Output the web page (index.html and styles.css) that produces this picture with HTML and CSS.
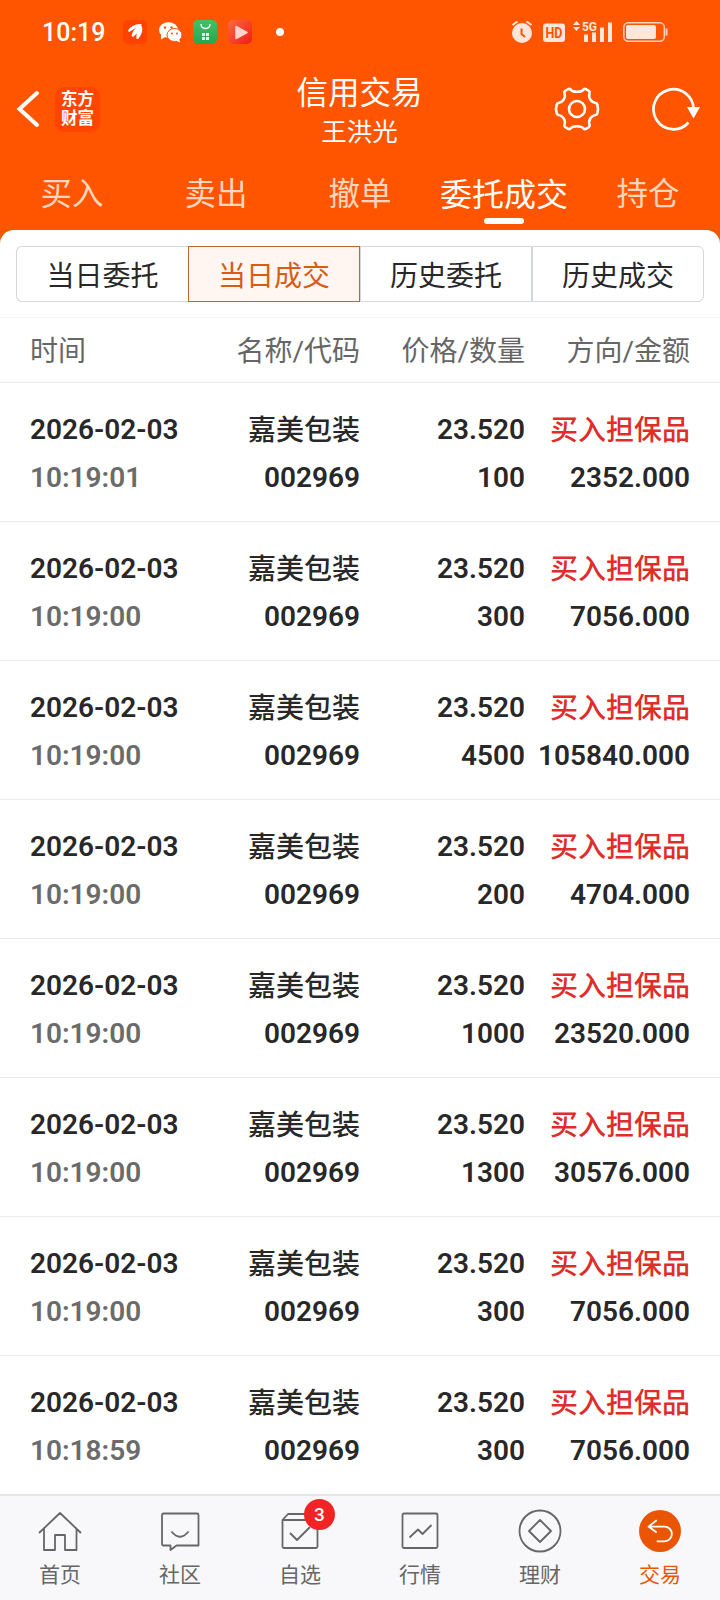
FILE: index.html
```html
<!DOCTYPE html>
<html lang="zh-CN">
    <head>
        <meta charset="utf-8">
        <meta name="viewport" content="width=device-width, initial-scale=1">
        <title>信用交易</title>
        <link rel="stylesheet" href="styles.css">
    </head>
    <body>
        <header class="top">
            <div class="status">
                <span class="clock">10:19</span>
                <svg class="status-left" width="170" height="40" viewBox="0 0 170 40">
                    <defs>
                        <linearGradient id="shop" x1="0" y1="0" x2="0" y2="1"><stop offset="0" stop-color="#43c168"/><stop offset="1" stop-color="#26a74b"/></linearGradient>
                        <linearGradient id="video" x1="0" y1="0" x2="1" y2="1"><stop offset="0" stop-color="#fb6a3c"/><stop offset="1" stop-color="#f01c1c"/></linearGradient>
                    </defs>
                    <rect x="8" y="8" width="24" height="24" rx="5" fill="#ff4200"/>
                    <path d="M13 18.500c2-3.500 6-6.500 13-6.500l1 1c-5 1-9 5-13 7zM16.500 24c1-5 4-9 9-11l1 1c-2 5-5 8-8.500 11zM21.500 27c-.500-5 1-10 5-13 2 4 0 9-3.500 13z" fill="#fff"/>
                    <ellipse cx="53.500" cy="18" rx="9.500" ry="7.700" fill="#fff"/>
                    <path d="M46 22v5.500l5-3z" fill="#fff"/>
                    <ellipse cx="59.500" cy="23" rx="7.500" ry="6.500" fill="#fff" stroke="#ff5500"/>
                    <path d="M61 28.500l4 2-1-4.500z" fill="#fff"/>
                    <g fill="#ff5500"><circle cx="50" cy="15.500" r="1.200"/><circle cx="56.500" cy="15.500" r="1.200"/><circle cx="57" cy="21.500" r="1"/><circle cx="62" cy="21.500" r="1"/></g>
                    <rect x="78" y="8" width="24" height="24" rx="5" fill="url(#shop)"/>
                    <path d="M86 12c0 6 9 6 9 0" fill="none" stroke="#fff" stroke-width="1.300"/>
                    <path d="M87 21h3v3h-3zM91 21h3v3h-3zM87 25h3v3h-3zM91 25h3v3h-3z" fill="#fff" opacity=".85"/>
                    <rect x="113" y="8" width="24" height="24" rx="5" fill="url(#video)"/>
                    <path d="M121 14.500l11 6-11 6z" fill="#ffd5cc" stroke="#ffd5cc" stroke-width="1.500" stroke-linejoin="round"/>
                    <circle cx="165" cy="20" r="4" fill="#fff"/>
                </svg>
                <svg class="status-right" width="170" height="36" viewBox="0 0 170 36">
                    <circle cx="17" cy="19" r="10" fill="#ffe6db"/>
                    <path d="M7.500 11l5-3.500M26.500 11l-5-3.500" stroke="#ffe6db" stroke-width="2"/>
                    <path d="M16.500 14.500v5.500l3.500 3" fill="none" stroke="#ff5500" stroke-width="2"/>
                    <rect x="38" y="9.500" width="22" height="18.500" rx="3" fill="#ffe6db"/>
                    <text class="hd" x="49" y="24" textLength="17" lengthAdjust="spacingAndGlyphs">HD</text>
                    <path d="M68 11l3.500-4 3.500 4zM68 13l3.500 4 3.500-4z" fill="#ffe6db"/>
                    <text class="net" x="84.500" y="16.800" textLength="15" lengthAdjust="spacingAndGlyphs">5G</text>
                    <path d="M79 20.500h4v7.500h-4zM87 18.500h4v9.500h-4zM95 13.500h4v14.500h-4zM103 8.500h4v19.500h-4z" fill="#ffe6db"/>
                    <rect x="118.800" y="8.800" width="40.500" height="18.500" rx="4.500" fill="none" stroke="#ffd0b8" stroke-width="1.500"/>
                    <rect x="121" y="11" width="30" height="14" rx="2" fill="#ffe6db"/>
                    <path d="M161.500 14.500v7" stroke="#ffd0b8" stroke-width="2"/>
                </svg>
            </div>
            <div class="titlebar">
                <div class="side">
                    <svg class="back" width="24" height="40" viewBox="0 0 24 40"><path d="M21 4L3.500 20 21 36" fill="none" stroke="#fff" stroke-width="4" stroke-linecap="round"/></svg>
                    <span class="logo">东方<br>财富</span>
                </div>
                <div class="titles">
                    <h1 class="title">信用交易</h1>
                    <div class="user">王洪光</div>
                </div>
                <div class="side right">
                    <svg width="48" height="48" viewBox="0 0 48 48" fill="none" stroke="#fff" stroke-width="2.600" stroke-linejoin="round">
                        <path d="M17.500 4.500Q19 6.800 24 6.800T30.500 4.500Q31.500 3.500 33 4.200L36 6Q37.200 7 36.500 8.500C35 13 38.500 17.500 42.500 18Q44 18.300 44.300 19.500Q45.800 24 44.300 28.500Q44 29.700 42.500 30C38.500 30.500 35 35 36.500 39.500Q37.200 41 36 42L33 43.800Q31.500 44.500 30.500 43.500Q29 41.200 24 41.200T17.500 43.500Q16.500 44.500 15 43.800L12 42Q10.800 41 11.500 39.500C13 35 9.500 30.500 5.500 30Q4 29.700 3.700 28.500Q2.200 24 3.700 19.500Q4 18.300 5.500 18C9.500 17.500 13 13 11.500 8.500Q10.800 7 12 6L15 4.200Q16.500 3.500 17.500 4.500Z"/>
                        <circle cx="24" cy="24" r="8"/>
                    </svg>
                    <svg width="48" height="48" viewBox="0 0 48 48"><path d="M36.500 37.500A20 20 0 1 1 41.500 24" fill="none" stroke="#fff" stroke-width="2.700"/><path d="M35 22h13l-6.500 11.500z" fill="#fff"/></svg>
                </div>
            </div>
            <nav class="tabs">
                <a class="tab">买入</a>
                <a class="tab">卖出</a>
                <a class="tab">撤单</a>
                <a class="tab active">委托成交</a>
                <a class="tab">持仓</a>
            </nav>
        </header>

        <main class="sheet-wrap">
            <div class="sheet">
                <div class="segments">
                    <a class="segment">当日委托</a>
                    <a class="segment active">当日成交</a>
                    <a class="segment">历史委托</a>
                    <a class="segment">历史成交</a>
                </div>
                <div class="list-head">
                    <span>时间</span><span>名称/代码</span><span>价格/数量</span><span>方向/金额</span>
                </div>
                <div class="row">
                    <span>2026-02-03</span><span class="name">嘉美包装</span><span>23.520</span><span class="buy">买入担保品</span>
                    <span class="time">10:19:01</span><span>002969</span><span>100</span><span>2352.000</span>
                </div>
                <div class="row">
                    <span>2026-02-03</span><span class="name">嘉美包装</span><span>23.520</span><span class="buy">买入担保品</span>
                    <span class="time">10:19:00</span><span>002969</span><span>300</span><span>7056.000</span>
                </div>
                <div class="row">
                    <span>2026-02-03</span><span class="name">嘉美包装</span><span>23.520</span><span class="buy">买入担保品</span>
                    <span class="time">10:19:00</span><span>002969</span><span>4500</span><span>105840.000</span>
                </div>
                <div class="row">
                    <span>2026-02-03</span><span class="name">嘉美包装</span><span>23.520</span><span class="buy">买入担保品</span>
                    <span class="time">10:19:00</span><span>002969</span><span>200</span><span>4704.000</span>
                </div>
                <div class="row">
                    <span>2026-02-03</span><span class="name">嘉美包装</span><span>23.520</span><span class="buy">买入担保品</span>
                    <span class="time">10:19:00</span><span>002969</span><span>1000</span><span>23520.000</span>
                </div>
                <div class="row">
                    <span>2026-02-03</span><span class="name">嘉美包装</span><span>23.520</span><span class="buy">买入担保品</span>
                    <span class="time">10:19:00</span><span>002969</span><span>1300</span><span>30576.000</span>
                </div>
                <div class="row">
                    <span>2026-02-03</span><span class="name">嘉美包装</span><span>23.520</span><span class="buy">买入担保品</span>
                    <span class="time">10:19:00</span><span>002969</span><span>300</span><span>7056.000</span>
                </div>
                <div class="row">
                    <span>2026-02-03</span><span class="name">嘉美包装</span><span>23.520</span><span class="buy">买入担保品</span>
                    <span class="time">10:18:59</span><span>002969</span><span>300</span><span>7056.000</span>
                </div>
            </div>
        </main>

        <nav class="bottom">
            <a class="item">
                <svg class="icon" viewBox="0 0 48 48"><path d="M3 26L24 6 45 26M8 21.500V43H19V28H29V43H40.500V21.500"/></svg>
                首页
            </a>
            <a class="item">
                <svg class="icon" viewBox="0 0 48 48"><path d="M7.500 6.500H41a1.500 1.500 0 0 1 1.500 1.500V38.500H20.500L14.500 43V38.500H7.500a1.500 1.500 0 0 1-1.500-1.500V8a1.500 1.500 0 0 1 1.500-1.500zM15.500 24.500Q24 35 32.500 24.500"/></svg>
                社区
            </a>
            <a class="item">
                <svg class="icon" viewBox="0 0 48 48"><path d="M6.500 13H41.500V39.500a1.500 1.500 0 0 1-1.500 1.500H8a1.500 1.500 0 0 1-1.500-1.500zL12 7H36L41.500 13M14 26L21 33 34 20"/></svg>
                自选
                <span class="badge">3</span>
            </a>
            <a class="item">
                <svg class="icon" viewBox="0 0 48 48"><rect x="6.500" y="6.500" width="35" height="34.500" rx="1.500"/><path d="M13.500 30.500L22 22.500 26.500 27 35.500 18"/></svg>
                行情
            </a>
            <a class="item">
                <svg class="icon" viewBox="0 0 48 48"><circle cx="24" cy="24" r="20.500"/><path d="M24 13L35 24 24 35 13 24z"/></svg>
                理财
            </a>
            <a class="item active">
                <svg class="icon" viewBox="0 0 48 48"><circle class="disc" cx="24" cy="24" r="21"/><path d="M20.700 13.300L12.500 19.600 20.700 25.500M12.500 19.600H28.500a7.300 7.300 0 0 1 0 14.700H20.700"/></svg>
                交易
            </a>
        </nav>
    </body>
</html>
```
FILE: styles.css
```css
* {
    box-sizing: border-box;
}

body {
    margin: 0;
    width: 720px;
    height: 1600px;
    display: flex;
    flex-direction: column;
    background: #fff;
    color: #282828;
    font-family: Roboto, "Noto Sans CJK SC", sans-serif;
    overflow: hidden;
}

svg {
    display: block;
    flex: none;
}

/* header */
.top {
    height: 230px;
    background: #ff5500;
    color: #fff;
}

.status {
    display: flex;
    height: 64px;
    padding: 12px 45px 0 42px;
}

.clock {
    width: 73px;
    font-size: 25px;
    font-weight: 500;
    line-height: 42px;
}

.status-right {
    margin: 2px 0 0 220px;
}

.hd {
    font: bold 14.5px Roboto, sans-serif;
    fill: #ff5500;
    text-anchor: middle;
}

.net {
    font: bold 13px Roboto, sans-serif;
    fill: #ffe6db;
    text-anchor: middle;
}

.titlebar {
    display: flex;
    justify-content: space-between;
    height: 94px;
    padding: 0 20px 0 16px;
}

.side {
    display: flex;
    align-items: center;
    width: 200px;
    height: 90px;
}

.side.right {
    justify-content: flex-end;
    gap: 51px;
}

.back {
    margin-right: 15px;
}

.logo {
    width: 45px;
    height: 45px;
    padding-top: 3px;
    border-radius: 9px;
    background: #ff4500;
    font-size: 16.5px;
    font-weight: bold;
    line-height: 19px;
    text-align: center;
}

.titles {
    margin-left: 3px;
    padding-top: 9px;
    text-align: center;
}

.title {
    margin: 0;
    font-size: 31.5px;
    font-weight: normal;
    line-height: 42px;
}

.user {
    font-size: 25.5px;
    line-height: 34px;
}

.tabs {
    display: flex;
}

.tab {
    position: relative;
    width: 144px;
    color: #ffd5bd;
    font-size: 31.5px;
    line-height: 74px;
    text-align: center;
}

.tab.active {
    color: #fff;
    font-size: 32px;
}

.tab.active::after {
    content: "";
    position: absolute;
    left: 52px;
    top: 60px;
    width: 40px;
    height: 6px;
    border-radius: 3px;
    background: #fff;
}

/* list */
.sheet-wrap {
    height: 1264px;
    background: linear-gradient(#ec5800 20px, #fff 20px);
}

.sheet {
    padding-top: 16px;
    border-radius: 14px 14px 0 0;
    background: #fff;
}

.segments {
    display: flex;
    height: 56px;
    margin: 0 16px 15px;
}

.segment {
    width: 172px;
    border: 1px solid #d3d7d9;
    font-size: 28px;
    line-height: 59px;
    text-align: center;
}

.segment:first-child {
    border-radius: 6px 0 0 6px;
    border-right: 0;
}

.segment:last-child {
    border-radius: 0 6px 6px 0;
}

.segment.active {
    border-color: #c0672f;
    background: #fff5f1;
    color: #d85c12;
}

.list-head,
.row {
    display: grid;
    grid-template-columns: repeat(4, 165px);
    padding: 0 30px;
    border-bottom: 1px solid #ebebeb;
    text-align: right;
    white-space: nowrap;
}

.list-head {
    height: 66px;
    border-top: 1px solid #f4f4f4;
    color: #666;
    font-size: 28px;
    line-height: 68px;
}

.list-head span:first-child,
.row span:nth-child(4n + 1) {
    text-align: left;
}

.row {
    height: 139px;
    padding-top: 23px;
    grid-auto-rows: 48px;
    font-size: 28px;
    font-weight: 600;
    line-height: 48px;
}

.row span:nth-child(4n) {
    margin-left: -10px;
}

.row .time {
    color: #6b6b6b;
}

.row .name,
.row .buy {
    font-weight: 500;
    line-height: 50px;
}

.row .buy {
    color: #e02c2a;
}

/* bottom nav */
.bottom {
    display: flex;
    height: 106px;
    border-top: 2px solid #e6e6e6;
    background: #f8f8fa;
}

.item {
    position: relative;
    display: flex;
    flex-direction: column;
    align-items: center;
    width: 120px;
    padding-top: 11px;
    color: #666;
    font-size: 21px;
    line-height: 40px;
}

.icon {
    width: 48px;
    height: 48px;
    fill: none;
    stroke: #666;
    stroke-width: 1.8;
    stroke-linejoin: round;
}

.item.active {
    color: #ea5504;
}

.item.active .icon {
    stroke: #fff;
}

.disc {
    fill: #ea5504;
    stroke: none;
}

.badge {
    position: absolute;
    left: 64px;
    top: 3px;
    width: 31px;
    height: 31px;
    border-radius: 50%;
    background: #f12425;
    color: #fff;
    font-size: 19px;
    font-weight: 500;
    line-height: 31px;
    text-align: center;
}
```
